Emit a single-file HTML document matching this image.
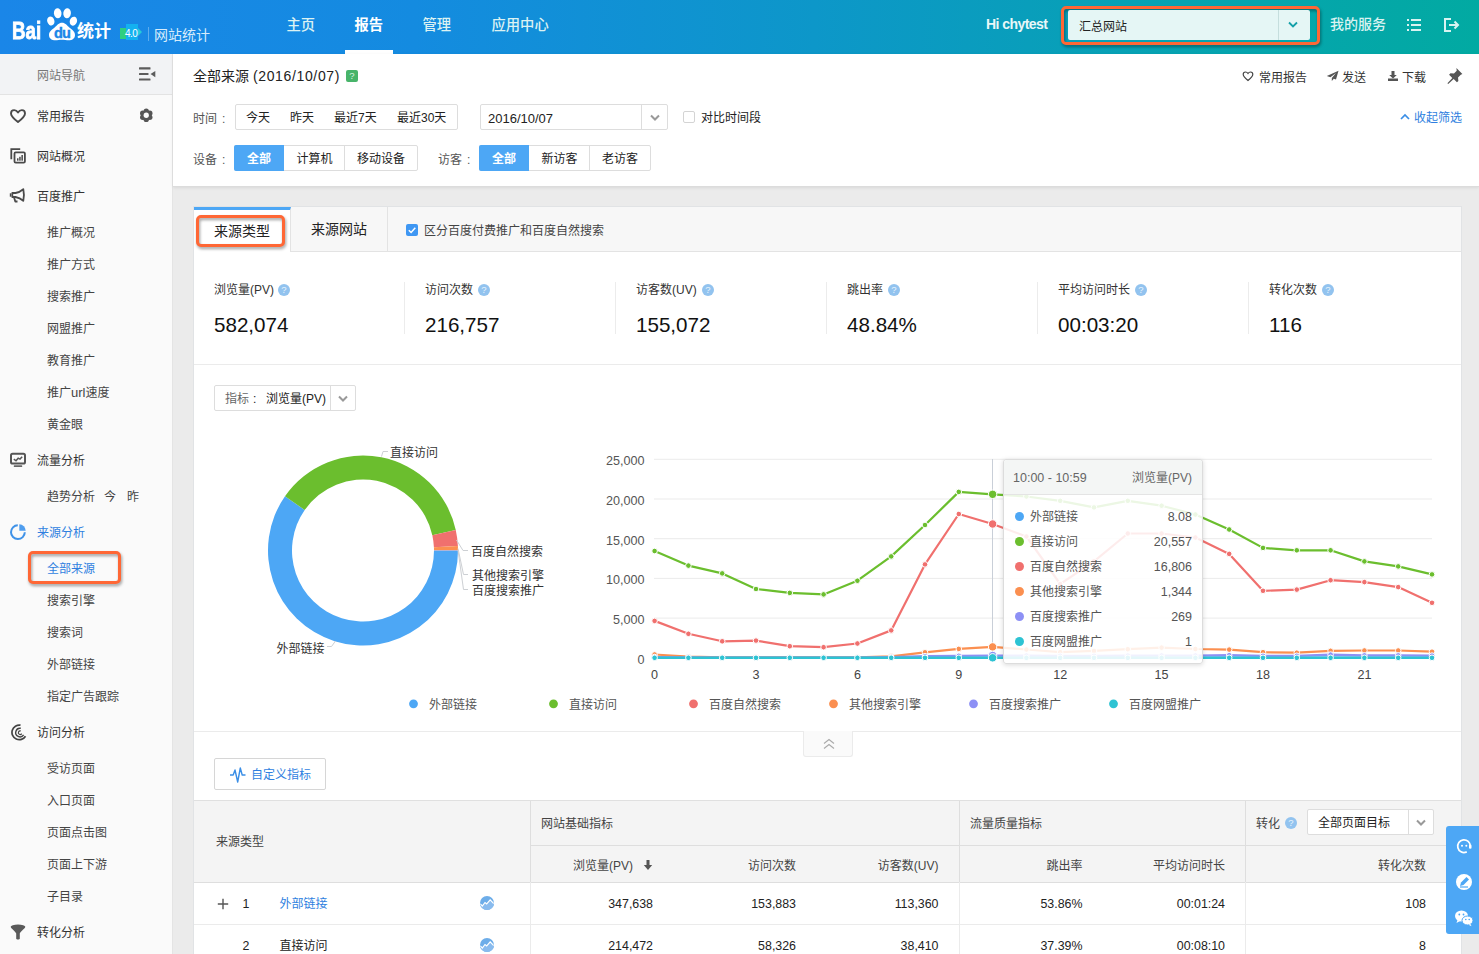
<!DOCTYPE html>
<html lang="zh-CN">
<head>
<meta charset="utf-8">
<title>百度统计 - 全部来源</title>
<style>
*{box-sizing:border-box;margin:0;padding:0}
html,body{width:1479px;height:954px;overflow:hidden}
body{font-family:"Liberation Sans","Noto Sans CJK SC",sans-serif;font-size:12px;color:#333;background:#ebebeb;position:relative}
.abs{position:absolute}
.t{position:absolute;white-space:nowrap;line-height:20px;height:20px}
/* header */
#hd{position:absolute;left:0;top:0;width:1479px;height:54px;background:linear-gradient(90deg,#1a86e8 0%,#148be0 28%,#0d97c9 55%,#06a3b1 80%,#02aaa2 100%)}
#hd .nav{position:absolute;top:14.500px;font-size:14.300px;line-height:20px;color:#dcf2f3;white-space:nowrap;font-weight:500;margin-left:.5px}
#hd .nav.on{color:#fff;font-weight:bold}
/* sidebar */
#sb{position:absolute;left:0;top:54px;width:173px;height:900px;background:#fafafa;border-right:1px solid #e4e4e4}
#sb .nh{position:absolute;left:0;top:0;width:172px;height:41px;background:#f2f3f5;border-bottom:1px solid #e3e3e3}
#sb .m{position:absolute;left:37px;font-size:12px;line-height:20px;color:#333;white-space:nowrap}
#sb .s{position:absolute;left:47px;font-size:12px;line-height:20px;color:#444;white-space:nowrap}
#sb .ic{position:absolute;left:9px;width:18px;height:18px}
/* top panel */
#tp{position:absolute;left:173px;top:54px;width:1306px;height:133px;background:#fff;border-bottom:1px solid #dcdcdc;box-shadow:0 1px 3px rgba(0,0,0,.08)}
.grp{position:absolute;height:26px;border:1px solid #ddd;border-radius:2px;background:#fff}
.grp span{position:absolute;top:0;height:24px;line-height:25px;padding-top:1px;text-align:center;color:#222;white-space:nowrap}
.grp span.on{background:#4da7f5;color:#fff;font-weight:bold;top:-1px;height:26px;line-height:27px}
/* card */
#cd{position:absolute;left:194px;top:207px;width:1267px;height:760px;background:#fff}
.hp{position:absolute;width:12px;height:12px;border-radius:6px;background:#92c3ef;color:#e9f3fc;font-size:9.500px;line-height:12.500px;text-align:center;font-style:normal}
</style>
</head>
<body>
<div id="hd">
<span class="t" style="left:12px;top:17px;font-size:23.500px;font-weight:bold;color:#fff;line-height:28px;height:28px;letter-spacing:0;transform:scaleX(.8);transform-origin:0 0;-webkit-text-stroke:.8px #fff">Bai</span>
<svg class="abs" style="left:44px;top:7px" width="36" height="36" viewBox="0 0 36 36">
<g fill="#fff">
<ellipse cx="6.800" cy="14" rx="3.600" ry="4.600" transform="rotate(-18 6.800 14)"/>
<ellipse cx="13.700" cy="6.200" rx="3.800" ry="5" transform="rotate(-6 13.700 6.200)"/>
<ellipse cx="23.100" cy="6.200" rx="3.800" ry="5" transform="rotate(6 23.100 6.200)"/>
<ellipse cx="29.400" cy="14.200" rx="3.600" ry="4.600" transform="rotate(18 29.400 14.200)"/>
<path d="M18 15.800c3.300 0 4.800 2.600 7.600 5 2.700 2.200 5.400 3.900 5.400 7.100 0 3.700-3.100 5.400-6.200 5.400-2.500 0-4.300-.6-6.800-.6s-4.300.6-6.800.6c-3.100 0-6.200-1.700-6.200-5.400 0-3.200 2.700-4.900 5.400-7.100 2.800-2.400 4.300-5 7.600-5z"/>
</g>
<text x="18" y="30.800" text-anchor="middle" font-family="Liberation Sans, sans-serif" font-weight="bold" font-size="14.500" fill="#1a86e8" stroke="#1a86e8" stroke-width=".4" letter-spacing="-.8">du</text>
</svg>
<span class="t" style="left:77px;top:20px;font-size:17px;font-weight:bold;color:#fff;line-height:24px;height:24px">统计</span>
<div class="abs" style="left:120px;top:28px;width:6.500px;height:11px;background:#2fcf7f"></div>
<div class="abs" style="left:125.500px;top:24px;width:12.500px;height:15.800px;background:#14b1f0"></div>
<div class="abs" style="left:138px;top:28px;width:0;height:0;border-top:4.500px solid transparent;border-bottom:4.500px solid transparent;border-left:4px solid #25cbd8"></div>
<span class="t" style="left:125px;top:23.500px;font-size:10px;color:#fff;letter-spacing:-.6px">4.0</span>
<div class="abs" style="left:148px;top:27px;width:1px;height:14px;background:rgba(255,255,255,.3)"></div>
<span class="t" style="left:154px;top:25px;font-size:14px;color:#d6ecfb">网站统计</span>
<span class="nav" style="left:286px">主页</span>
<span class="nav on" style="left:354px">报告</span>
<span class="nav" style="left:422px">管理</span>
<span class="nav" style="left:491px">应用中心</span>
<div class="abs" style="left:345px;top:50px;width:48px;height:4px;background:#fff"></div>
<span class="t" style="left:986px;top:14px;font-size:14px;font-weight:bold;color:#e8f7f8;letter-spacing:-.55px">Hi chytest</span>
<div class="abs" style="left:1060.500px;top:5.800px;width:259px;height:39.700px;border:3px solid #ff6735;border-radius:5px;filter:drop-shadow(1.500px 2px 1.500px rgba(0,0,0,.38))"></div>
<div class="abs" style="left:1068px;top:10px;width:242px;height:30px;background:#e5f6f5;border-radius:2px"></div>
<div class="abs" style="left:1278px;top:10px;width:1px;height:30px;background:#c5dedd"></div>
<span class="t" style="left:1079px;top:16.500px;font-size:12px;color:#222">汇总网站</span>
<svg class="abs" style="left:1287px;top:20px" width="12" height="10" viewBox="0 0 12 10"><path d="M2 2.500l4 4 4-4" fill="none" stroke="#14a0a8" stroke-width="1.800"/></svg>
<span class="t" style="left:1330px;top:14px;font-size:14px;color:#d9f3f1;font-weight:500">我的服务</span>
<svg class="abs" style="left:1406px;top:17px" width="16" height="16" viewBox="0 0 16 16"><g fill="#d9f3f1"><rect x="1" y="2" width="2" height="2"/><rect x="5" y="2" width="10" height="2"/><rect x="1" y="7" width="2" height="2"/><rect x="5" y="7" width="10" height="2"/><rect x="1" y="12" width="2" height="2"/><rect x="5" y="12" width="10" height="2"/></g></svg>
<svg class="abs" style="left:1443px;top:17px" width="18" height="16" viewBox="0 0 18 16"><path d="M8 2H2v12h6" fill="none" stroke="#d9f3f1" stroke-width="2"/><path d="M6 8h8M11.500 4.500L15 8l-3.500 3.500" fill="none" stroke="#d9f3f1" stroke-width="2"/></svg>
</div>
<div id="sb">
<div class="nh"></div>
<span class="m" style="top:12px;color:#777">网站导航</span>
<svg class="abs" style="left:138px;top:12px" width="18" height="16" viewBox="0 0 18 16"><g fill="#5c5c5c"><rect x="1" y="1.300" width="11.500" height="2.100" rx=".5"/><rect x="1" y="6.900" width="9.500" height="2.100" rx=".5"/><rect x="1" y="12.400" width="11.500" height="2.100" rx=".5"/><path d="M17.300 5v6.200l-4.800-3.100z"/></g></svg>
<svg class="ic" style="top:53px" viewBox="0 0 18 18"><path d="M9 15C4.300 11.300 2 9 2 6.400 2 4.500 3.400 3.100 5.200 3.100c1.500 0 2.900.9 3.800 2.300.9-1.400 2.300-2.300 3.800-2.300 1.800 0 3.200 1.400 3.200 3.300 0 2.600-2.300 4.900-7 8.600z" fill="none" stroke="#4a4a4a" stroke-width="1.900" stroke-linejoin="round"/></svg>
<span class="m" style="top:53px">常用报告</span>
<svg class="abs" style="left:139px;top:54px" width="14.500" height="14.500" viewBox="0 0 16 16"><g fill="#555"><circle cx="8" cy="8" r="5.800"/><circle cx="11.98" cy="10.30" r="2.900"/><circle cx="8.00" cy="12.60" r="2.900"/><circle cx="4.02" cy="10.30" r="2.900"/><circle cx="4.02" cy="5.70" r="2.900"/><circle cx="8.00" cy="3.40" r="2.900"/><circle cx="11.98" cy="5.70" r="2.900"/></g><circle cx="8" cy="8" r="2.900" fill="#fafafa"/></svg>
<svg class="ic" style="top:92px" viewBox="0 0 18 18"><path d="M11.200 3.100H2.300v10.200" fill="none" stroke="#4a4a4a" stroke-width="1.800"/><rect x="5.500" y="6.300" width="10.400" height="10.400" rx="1.200" fill="none" stroke="#4a4a4a" stroke-width="1.800"/><rect x="8" y="12.300" width="1.500" height="2.400" fill="#4a4a4a"/><rect x="10.200" y="10.800" width="1.500" height="3.900" fill="#4a4a4a"/><rect x="12.400" y="9" width="1.500" height="5.700" fill="#4a4a4a"/></svg>
<span class="m" style="top:93px">网站概况</span>
<svg class="ic" style="top:132px" viewBox="0 0 18 18"><path d="M3.300 7h3.200c3-.6 5.700-2 7.800-3.800.8 3.600.8 8 0 11.600-2.100-1.800-4.800-3.200-7.800-3.800H3.300z" fill="none" stroke="#4a4a4a" stroke-width="1.800" stroke-linejoin="round"/><path d="M5 11.200l1.300 4.300h2.200" fill="none" stroke="#4a4a4a" stroke-width="1.800" stroke-linejoin="round"/><rect x=".8" y="7.300" width="1.400" height="3.400" fill="#4a4a4a"/></svg>
<span class="m" style="top:133px">百度推广</span>
<span class="s" style="top:169px">推广概况</span>
<span class="s" style="top:201px">推广方式</span>
<span class="s" style="top:233px">搜索推广</span>
<span class="s" style="top:265px">网盟推广</span>
<span class="s" style="top:297px">教育推广</span>
<span class="s" style="top:329px">推广<span style="font-size:13px">url</span>速度</span>
<span class="s" style="top:361px">黄金眼</span>
<svg class="ic" style="top:397px" viewBox="0 0 18 18"><rect x="2" y="2.800" width="14" height="9.800" rx="1.600" fill="none" stroke="#555" stroke-width="2"/><path d="M4.800 8.200l2.200 1.600 2.200-2.600 1.800.9 2.200-2.300" fill="none" stroke="#555" stroke-width="1.500"/><rect x="4.800" y="14.300" width="8.400" height="1.600" rx=".5" fill="#666"/></svg>
<span class="m" style="top:397px">流量分析</span>
<span class="s" style="top:433px">趋势分析</span>
<span class="s" style="left:104px;top:433px">今</span>
<span class="s" style="left:127px;top:433px">昨</span>
<svg class="ic" style="top:469px" viewBox="0 0 18 18"><path d="M8.800 2.300A6.900 6.900 0 1 0 15.800 9.300" fill="none" stroke="#3f92e8" stroke-width="2"/><path d="M10.300 1.300a6.400 6.400 0 0 1 6.400 6.400h-6.400z" fill="#4f9dee"/></svg>
<span class="m" style="top:469px;color:#2f7fe0">来源分析</span>
<div class="abs" style="left:27.700px;top:497.400px;width:93px;height:32.500px;border:3px solid #ff6735;border-radius:5px;filter:drop-shadow(1.500px 2px 1.500px rgba(0,0,0,.38))"></div>
<span class="s" style="top:505px;color:#2f7fe0">全部来源</span>
<span class="s" style="top:537px">搜索引擎</span>
<span class="s" style="top:569px">搜索词</span>
<span class="s" style="top:601px">外部链接</span>
<span class="s" style="top:633px">指定广告跟踪</span>
<svg class="ic" style="top:669px" viewBox="0 0 18 18"><path d="M11.500 2.200a7.300 7.300 0 1 0 5 11" fill="none" stroke="#444" stroke-width="1.700"/><path d="M11.800 5.300a4.300 4.300 0 1 0 2.800 6.600" fill="none" stroke="#444" stroke-width="1.400"/><path d="M11.800 8a1.800 1.800 0 1 0 .9 2.600" fill="none" stroke="#444" stroke-width="1.200"/></svg>
<span class="m" style="top:669px">访问分析</span>
<span class="s" style="top:705px">受访页面</span>
<span class="s" style="top:737px">入口页面</span>
<span class="s" style="top:769px">页面点击图</span>
<span class="s" style="top:801px">页面上下游</span>
<span class="s" style="top:833px">子目录</span>
<svg class="ic" style="top:869px" viewBox="0 0 18 18"><ellipse cx="9" cy="3.800" rx="7.300" ry="2.200" fill="#5a5a5a"/><path d="M1.700 4c.3 1.200 5.500 5.500 5.500 6.600v5.200c0 .9 3.600.9 3.600 0v-5.200c0-1.100 5.200-5.400 5.500-6.600z" fill="#5a5a5a"/></svg>
<span class="m" style="top:869px">转化分析</span>
</div>
<div id="tp">
<span class="t" style="left:20px;top:12px;font-size:14px;color:#222">全部来源 <span style="letter-spacing:.65px">(2016/10/07)</span></span>
<div class="abs" style="left:173px;top:15.500px;width:12px;height:12px;background:#48b46a;border-radius:2px;color:#d9f2e0;font-size:9.500px;line-height:12px;text-align:center">?</div>
<svg class="abs" style="left:1069px;top:16px" width="12" height="12" viewBox="0 0 12 12"><path d="M6 10.500C2.500 7.800 1.200 6.200 1.200 4.300 1.200 3 2.200 2 3.500 2c1 0 1.900.6 2.500 1.500C6.600 2.600 7.500 2 8.500 2c1.300 0 2.300 1 2.300 2.300 0 1.900-1.300 3.500-4.800 6.200z" fill="none" stroke="#444" stroke-width="1.200"/></svg>
<span class="t" style="left:1086px;top:13.5px;color:#333">常用报告</span>
<svg class="abs" style="left:1153px;top:16px" width="13" height="12" viewBox="0 0 13 12"><path d="M12.500.8L.8 6l3.600 1.300L10 3 5.800 8v3l2-2.300 2.200.9z" fill="#555"/></svg>
<span class="t" style="left:1169px;top:13.5px;color:#333">发送</span>
<svg class="abs" style="left:1214px;top:16px" width="12" height="12" viewBox="0 0 12 12"><path d="M4.500 1h3v4h2.300L6 8.500 2.200 5h2.300z" fill="#555"/><path d="M1 8.500h10V11H1z" fill="#555"/></svg>
<span class="t" style="left:1229px;top:13.5px;color:#333">下载</span>
<svg class="abs" style="left:1272.500px;top:13px" width="17.500" height="17.500" viewBox="0 0 16 16"><path d="M9.500 1l5.500 5.500-1.500.5-2.500 2.500.3 3.200-1.300 1.300-3-3L2 15.500l-.7-.7L5.800 10l-3-3 1.300-1.300 3.200.3L9.800 3.500z" fill="#555"/></svg>
<span class="t" style="left:20px;top:54.5px;color:#555">时间<span style="margin-left:5px">:</span></span>
<div class="grp" style="left:62px;top:50px;width:223px"><span style="left:10px">今天</span><span style="left:54px">昨天</span><span style="left:98px">最近7天</span><span style="left:161px">最近30天</span></div>
<div class="grp" style="left:307px;top:50px;width:188px"><span style="left:7px;font-size:13px">2016/10/07</span><i class="abs" style="left:160px;top:0;width:1px;height:24px;background:#ddd"></i><svg class="abs" style="left:168px;top:8px" width="12" height="10" viewBox="0 0 12 10"><path d="M2 2.500l4 4 4-4" fill="none" stroke="#999" stroke-width="2"/></svg></div>
<div class="abs" style="left:510px;top:57px;width:12px;height:12px;border:1px solid #d4d4d4;border-radius:2px;background:#fff"></div>
<span class="t" style="left:528px;top:54px;color:#222">对比时间段</span>
<svg class="abs" style="left:1226px;top:58px" width="12" height="10" viewBox="0 0 12 10"><path d="M2 7l4-4 4 4" fill="none" stroke="#3a8ee6" stroke-width="1.700"/></svg>
<span class="t" style="left:1241px;top:54px;color:#2f7fe0">收起筛选</span>
<span class="t" style="left:20px;top:95.5px;color:#555">设备<span style="margin-left:5px">:</span></span>
<div class="grp" style="left:61px;top:91px;width:184px"><span class="on" style="left:-1px;width:50px;border-radius:2px 0 0 2px">全部</span><span style="left:50px;width:60px;border-right:1px solid #ddd">计算机</span><span style="left:110px;width:72px">移动设备</span></div>
<span class="t" style="left:265px;top:95.5px;color:#555">访客<span style="margin-left:5px">:</span></span>
<div class="grp" style="left:306px;top:91px;width:172px"><span class="on" style="left:-1px;width:50px;border-radius:2px 0 0 2px">全部</span><span style="left:50px;width:60px;border-right:1px solid #ddd">新访客</span><span style="left:110px;width:60px">老访客</span></div>
</div>
<div id="cd">
<div class="abs" style="left:0;top:0;width:1267px;height:45px;background:#f7f7f7;border-bottom:1px solid #e3e3e3"></div>
<div class="abs" style="left:0;top:0;width:97px;height:45px;background:#fff;border-top:3px solid #4da7f5;border-right:1px solid #e3e3e3"></div>
<div class="abs" style="left:193px;top:0;width:1px;height:44px;background:#e3e3e3"></div>
<div class="abs" style="left:1.500px;top:8.300px;width:89.200px;height:32.200px;border:3px solid #ff6735;border-radius:5px;filter:drop-shadow(1.500px 2px 1.500px rgba(0,0,0,.38))"></div>
<span class="t" style="left:20px;top:13.8px;font-size:14px;color:#222">来源类型</span>
<span class="t" style="left:117px;top:12.0px;font-size:14px;color:#222">来源网站</span>
<div class="abs" style="left:212px;top:17px;width:12px;height:12px;background:#3f97f3;border-radius:2px"><svg width="12" height="12" viewBox="0 0 12 12" style="display:block"><path d="M2.800 6.200l2.300 2.300 4.200-4.700" fill="none" stroke="#fff" stroke-width="1.500"/></svg></div>
<span class="t" style="left:230px;top:14.3px;color:#444">区分百度付费推广和百度自然搜索</span>
<span class="t" style="left:20px;top:73.3px;color:#333">浏览量(PV)</span>
<i class="hp" style="left:84px;top:76.5px">?</i>
<span class="t" style="left:20px;top:105.3px;font-size:20.600px;color:#111;line-height:26px;height:26px">582,074</span>
<span class="t" style="left:231px;top:73.3px;color:#333">访问次数</span>
<i class="hp" style="left:284px;top:76.5px">?</i>
<span class="t" style="left:231px;top:105.3px;font-size:20.600px;color:#111;line-height:26px;height:26px">216,757</span>
<div class="abs" style="left:210px;top:75px;width:1px;height:52px;background:#ececec"></div>
<span class="t" style="left:442px;top:73.3px;color:#333">访客数(UV)</span>
<i class="hp" style="left:508px;top:76.5px">?</i>
<span class="t" style="left:442px;top:105.3px;font-size:20.600px;color:#111;line-height:26px;height:26px">155,072</span>
<div class="abs" style="left:421px;top:75px;width:1px;height:52px;background:#ececec"></div>
<span class="t" style="left:653px;top:73.3px;color:#333">跳出率</span>
<i class="hp" style="left:694px;top:76.5px">?</i>
<span class="t" style="left:653px;top:105.3px;font-size:20.600px;color:#111;line-height:26px;height:26px">48.84%</span>
<div class="abs" style="left:632px;top:75px;width:1px;height:52px;background:#ececec"></div>
<span class="t" style="left:864px;top:73.3px;color:#333">平均访问时长</span>
<i class="hp" style="left:941px;top:76.5px">?</i>
<span class="t" style="left:864px;top:105.3px;font-size:20.600px;color:#111;line-height:26px;height:26px">00:03:20</span>
<div class="abs" style="left:843px;top:75px;width:1px;height:52px;background:#ececec"></div>
<span class="t" style="left:1075px;top:73.3px;color:#333">转化次数</span>
<i class="hp" style="left:1128px;top:76.5px">?</i>
<span class="t" style="left:1075px;top:105.3px;font-size:20.600px;color:#111;line-height:26px;height:26px">116</span>
<div class="abs" style="left:1054px;top:75px;width:1px;height:52px;background:#ececec"></div>
<div class="abs" style="left:0;top:157px;width:1267px;height:1px;background:#ebebeb"></div>
<div class="grp" style="left:20px;top:178px;width:142px"><span style="left:10px;color:#666">指标<span style="margin-left:4px">:</span></span><span style="left:51px;color:#222">浏览量(PV)</span><i class="abs" style="left:115px;top:0;width:1px;height:24px;background:#ddd"></i><svg class="abs" style="left:122px;top:8px" width="12" height="10" viewBox="0 0 12 10"><path d="M2 2.500l4 4 4-4" fill="none" stroke="#999" stroke-width="2"/></svg></div>
<svg class="abs" style="left:-194px;top:-207px" width="1479" height="954" viewBox="0 0 1479 954" font-family="Liberation Sans, Noto Sans CJK SC, sans-serif" font-size="12">
<line x1="654" y1="459.3" x2="1432" y2="459.3" stroke="#ebebeb" stroke-width="1"/>
<text x="644.500" y="465.3" text-anchor="end" fill="#555" font-size="12.600">25,000</text>
<line x1="654" y1="499.0" x2="1432" y2="499.0" stroke="#ebebeb" stroke-width="1"/>
<text x="644.500" y="505.0" text-anchor="end" fill="#555" font-size="12.600">20,000</text>
<line x1="654" y1="538.7" x2="1432" y2="538.7" stroke="#ebebeb" stroke-width="1"/>
<text x="644.500" y="544.7" text-anchor="end" fill="#555" font-size="12.600">15,000</text>
<line x1="654" y1="578.4" x2="1432" y2="578.4" stroke="#ebebeb" stroke-width="1"/>
<text x="644.500" y="584.4" text-anchor="end" fill="#555" font-size="12.600">10,000</text>
<line x1="654" y1="618.1" x2="1432" y2="618.1" stroke="#ebebeb" stroke-width="1"/>
<text x="644.500" y="624.1" text-anchor="end" fill="#555" font-size="12.600">5,000</text>
<line x1="654" y1="657.8" x2="1432" y2="657.8" stroke="#ddd" stroke-width="1"/>
<text x="644.500" y="663.8" text-anchor="end" fill="#555" font-size="12.600">0</text>
<text x="654.6" y="678.700" text-anchor="middle" fill="#444" font-size="12.600">0</text>
<text x="756.0" y="678.700" text-anchor="middle" fill="#444" font-size="12.600">3</text>
<text x="857.4" y="678.700" text-anchor="middle" fill="#444" font-size="12.600">6</text>
<text x="958.8" y="678.700" text-anchor="middle" fill="#444" font-size="12.600">9</text>
<text x="1060.2" y="678.700" text-anchor="middle" fill="#444" font-size="12.600">12</text>
<text x="1161.6" y="678.700" text-anchor="middle" fill="#444" font-size="12.600">15</text>
<text x="1263.0" y="678.700" text-anchor="middle" fill="#444" font-size="12.600">18</text>
<text x="1364.4" y="678.700" text-anchor="middle" fill="#444" font-size="12.600">21</text>
<line x1="992.500" y1="459" x2="992.500" y2="658" stroke="#c9cfd8" stroke-width="1"/>
<polyline points="654.6,657.7 688.4,657.7 722.2,657.7 756.0,657.7 789.8,657.7 823.6,657.7 857.4,657.7 891.2,657.7 925.0,657.7 958.8,657.7 992.6,657.7 1026.4,657.7 1060.2,657.7 1094.0,657.7 1127.8,657.7 1161.6,657.7 1195.4,657.7 1229.2,657.7 1263.0,657.7 1296.8,657.7 1330.6,657.7 1364.4,657.7 1398.2,657.7 1432.0,657.7" fill="none" stroke="#4da7f5" stroke-width="2.200" stroke-linejoin="round"/>
<circle cx="654.6" cy="657.7" r="2.8" fill="#4da7f5" stroke="#fff" stroke-width="1"/>
<circle cx="688.4" cy="657.7" r="2.8" fill="#4da7f5" stroke="#fff" stroke-width="1"/>
<circle cx="722.2" cy="657.7" r="2.8" fill="#4da7f5" stroke="#fff" stroke-width="1"/>
<circle cx="756.0" cy="657.7" r="2.8" fill="#4da7f5" stroke="#fff" stroke-width="1"/>
<circle cx="789.8" cy="657.7" r="2.8" fill="#4da7f5" stroke="#fff" stroke-width="1"/>
<circle cx="823.6" cy="657.7" r="2.8" fill="#4da7f5" stroke="#fff" stroke-width="1"/>
<circle cx="857.4" cy="657.7" r="2.8" fill="#4da7f5" stroke="#fff" stroke-width="1"/>
<circle cx="891.2" cy="657.7" r="2.8" fill="#4da7f5" stroke="#fff" stroke-width="1"/>
<circle cx="925.0" cy="657.7" r="2.8" fill="#4da7f5" stroke="#fff" stroke-width="1"/>
<circle cx="958.8" cy="657.7" r="2.8" fill="#4da7f5" stroke="#fff" stroke-width="1"/>
<circle cx="992.6" cy="657.7" r="4.2" fill="#4da7f5" stroke="#fff" stroke-width="1"/>
<circle cx="1026.4" cy="657.7" r="2.8" fill="#4da7f5" stroke="#fff" stroke-width="1"/>
<circle cx="1060.2" cy="657.7" r="2.8" fill="#4da7f5" stroke="#fff" stroke-width="1"/>
<circle cx="1094.0" cy="657.7" r="2.8" fill="#4da7f5" stroke="#fff" stroke-width="1"/>
<circle cx="1127.8" cy="657.7" r="2.8" fill="#4da7f5" stroke="#fff" stroke-width="1"/>
<circle cx="1161.6" cy="657.7" r="2.8" fill="#4da7f5" stroke="#fff" stroke-width="1"/>
<circle cx="1195.4" cy="657.7" r="2.8" fill="#4da7f5" stroke="#fff" stroke-width="1"/>
<circle cx="1229.2" cy="657.7" r="2.8" fill="#4da7f5" stroke="#fff" stroke-width="1"/>
<circle cx="1263.0" cy="657.7" r="2.8" fill="#4da7f5" stroke="#fff" stroke-width="1"/>
<circle cx="1296.8" cy="657.7" r="2.8" fill="#4da7f5" stroke="#fff" stroke-width="1"/>
<circle cx="1330.6" cy="657.7" r="2.8" fill="#4da7f5" stroke="#fff" stroke-width="1"/>
<circle cx="1364.4" cy="657.7" r="2.8" fill="#4da7f5" stroke="#fff" stroke-width="1"/>
<circle cx="1398.2" cy="657.7" r="2.8" fill="#4da7f5" stroke="#fff" stroke-width="1"/>
<circle cx="1432.0" cy="657.7" r="2.8" fill="#4da7f5" stroke="#fff" stroke-width="1"/>
<polyline points="654.6,551.0 688.4,565.6 722.2,573.4 756.0,589.0 789.8,592.9 823.6,594.4 857.4,580.7 891.2,556.4 925.0,525.0 958.8,491.9 992.6,494.3 1026.4,496.5 1060.2,500.8 1094.0,507.4 1127.8,500.8 1161.6,505.7 1195.4,514.5 1229.2,529.5 1263.0,547.9 1296.8,550.3 1330.6,550.3 1364.4,561.4 1398.2,566.4 1432.0,574.4" fill="none" stroke="#6bbe2e" stroke-width="2.200" stroke-linejoin="round"/>
<circle cx="654.6" cy="551.0" r="2.8" fill="#6bbe2e" stroke="#fff" stroke-width="1"/>
<circle cx="688.4" cy="565.6" r="2.8" fill="#6bbe2e" stroke="#fff" stroke-width="1"/>
<circle cx="722.2" cy="573.4" r="2.8" fill="#6bbe2e" stroke="#fff" stroke-width="1"/>
<circle cx="756.0" cy="589.0" r="2.8" fill="#6bbe2e" stroke="#fff" stroke-width="1"/>
<circle cx="789.8" cy="592.9" r="2.8" fill="#6bbe2e" stroke="#fff" stroke-width="1"/>
<circle cx="823.6" cy="594.4" r="2.8" fill="#6bbe2e" stroke="#fff" stroke-width="1"/>
<circle cx="857.4" cy="580.7" r="2.8" fill="#6bbe2e" stroke="#fff" stroke-width="1"/>
<circle cx="891.2" cy="556.4" r="2.8" fill="#6bbe2e" stroke="#fff" stroke-width="1"/>
<circle cx="925.0" cy="525.0" r="2.8" fill="#6bbe2e" stroke="#fff" stroke-width="1"/>
<circle cx="958.8" cy="491.9" r="2.8" fill="#6bbe2e" stroke="#fff" stroke-width="1"/>
<circle cx="992.6" cy="494.3" r="4.2" fill="#6bbe2e" stroke="#fff" stroke-width="1"/>
<circle cx="1026.4" cy="496.5" r="2.8" fill="#6bbe2e" stroke="#fff" stroke-width="1"/>
<circle cx="1060.2" cy="500.8" r="2.8" fill="#6bbe2e" stroke="#fff" stroke-width="1"/>
<circle cx="1094.0" cy="507.4" r="2.8" fill="#6bbe2e" stroke="#fff" stroke-width="1"/>
<circle cx="1127.8" cy="500.8" r="2.8" fill="#6bbe2e" stroke="#fff" stroke-width="1"/>
<circle cx="1161.6" cy="505.7" r="2.8" fill="#6bbe2e" stroke="#fff" stroke-width="1"/>
<circle cx="1195.4" cy="514.5" r="2.8" fill="#6bbe2e" stroke="#fff" stroke-width="1"/>
<circle cx="1229.2" cy="529.5" r="2.8" fill="#6bbe2e" stroke="#fff" stroke-width="1"/>
<circle cx="1263.0" cy="547.9" r="2.8" fill="#6bbe2e" stroke="#fff" stroke-width="1"/>
<circle cx="1296.8" cy="550.3" r="2.8" fill="#6bbe2e" stroke="#fff" stroke-width="1"/>
<circle cx="1330.6" cy="550.3" r="2.8" fill="#6bbe2e" stroke="#fff" stroke-width="1"/>
<circle cx="1364.4" cy="561.4" r="2.8" fill="#6bbe2e" stroke="#fff" stroke-width="1"/>
<circle cx="1398.2" cy="566.4" r="2.8" fill="#6bbe2e" stroke="#fff" stroke-width="1"/>
<circle cx="1432.0" cy="574.4" r="2.8" fill="#6bbe2e" stroke="#fff" stroke-width="1"/>
<polyline points="654.6,620.9 688.4,633.8 722.2,641.3 756.0,640.6 789.8,646.2 823.6,647.2 857.4,643.5 891.2,630.4 925.0,564.4 958.8,514.0 992.6,524.0 1026.4,536.5 1060.2,584.0 1094.0,561.3 1127.8,533.5 1161.6,533.5 1195.4,537.5 1229.2,553.9 1263.0,590.8 1296.8,589.6 1330.6,580.2 1364.4,582.1 1398.2,587.1 1432.0,602.8" fill="none" stroke="#f0706e" stroke-width="2.200" stroke-linejoin="round"/>
<circle cx="654.6" cy="620.9" r="2.8" fill="#f0706e" stroke="#fff" stroke-width="1"/>
<circle cx="688.4" cy="633.8" r="2.8" fill="#f0706e" stroke="#fff" stroke-width="1"/>
<circle cx="722.2" cy="641.3" r="2.8" fill="#f0706e" stroke="#fff" stroke-width="1"/>
<circle cx="756.0" cy="640.6" r="2.8" fill="#f0706e" stroke="#fff" stroke-width="1"/>
<circle cx="789.8" cy="646.2" r="2.8" fill="#f0706e" stroke="#fff" stroke-width="1"/>
<circle cx="823.6" cy="647.2" r="2.8" fill="#f0706e" stroke="#fff" stroke-width="1"/>
<circle cx="857.4" cy="643.5" r="2.8" fill="#f0706e" stroke="#fff" stroke-width="1"/>
<circle cx="891.2" cy="630.4" r="2.8" fill="#f0706e" stroke="#fff" stroke-width="1"/>
<circle cx="925.0" cy="564.4" r="2.8" fill="#f0706e" stroke="#fff" stroke-width="1"/>
<circle cx="958.8" cy="514.0" r="2.8" fill="#f0706e" stroke="#fff" stroke-width="1"/>
<circle cx="992.6" cy="524.0" r="4.2" fill="#f0706e" stroke="#fff" stroke-width="1"/>
<circle cx="1026.4" cy="536.5" r="2.8" fill="#f0706e" stroke="#fff" stroke-width="1"/>
<circle cx="1060.2" cy="584.0" r="2.8" fill="#f0706e" stroke="#fff" stroke-width="1"/>
<circle cx="1094.0" cy="561.3" r="2.8" fill="#f0706e" stroke="#fff" stroke-width="1"/>
<circle cx="1127.8" cy="533.5" r="2.8" fill="#f0706e" stroke="#fff" stroke-width="1"/>
<circle cx="1161.6" cy="533.5" r="2.8" fill="#f0706e" stroke="#fff" stroke-width="1"/>
<circle cx="1195.4" cy="537.5" r="2.8" fill="#f0706e" stroke="#fff" stroke-width="1"/>
<circle cx="1229.2" cy="553.9" r="2.8" fill="#f0706e" stroke="#fff" stroke-width="1"/>
<circle cx="1263.0" cy="590.8" r="2.8" fill="#f0706e" stroke="#fff" stroke-width="1"/>
<circle cx="1296.8" cy="589.6" r="2.8" fill="#f0706e" stroke="#fff" stroke-width="1"/>
<circle cx="1330.6" cy="580.2" r="2.8" fill="#f0706e" stroke="#fff" stroke-width="1"/>
<circle cx="1364.4" cy="582.1" r="2.8" fill="#f0706e" stroke="#fff" stroke-width="1"/>
<circle cx="1398.2" cy="587.1" r="2.8" fill="#f0706e" stroke="#fff" stroke-width="1"/>
<circle cx="1432.0" cy="602.8" r="2.8" fill="#f0706e" stroke="#fff" stroke-width="1"/>
<polyline points="654.6,654.5 688.4,656.7 722.2,657.3 756.0,657.4 789.8,657.4 823.6,657.4 857.4,657.3 891.2,656.4 925.0,652.3 958.8,648.9 992.6,646.9 1026.4,649.5 1060.2,652.2 1094.0,650.9 1127.8,649.2 1161.6,647.6 1195.4,649.0 1229.2,649.6 1263.0,652.2 1296.8,652.7 1330.6,650.8 1364.4,650.5 1398.2,650.5 1432.0,651.7" fill="none" stroke="#fb8f50" stroke-width="2.200" stroke-linejoin="round"/>
<circle cx="654.6" cy="654.5" r="2.8" fill="#fb8f50" stroke="#fff" stroke-width="1"/>
<circle cx="688.4" cy="656.7" r="2.8" fill="#fb8f50" stroke="#fff" stroke-width="1"/>
<circle cx="722.2" cy="657.3" r="2.8" fill="#fb8f50" stroke="#fff" stroke-width="1"/>
<circle cx="756.0" cy="657.4" r="2.8" fill="#fb8f50" stroke="#fff" stroke-width="1"/>
<circle cx="789.8" cy="657.4" r="2.8" fill="#fb8f50" stroke="#fff" stroke-width="1"/>
<circle cx="823.6" cy="657.4" r="2.8" fill="#fb8f50" stroke="#fff" stroke-width="1"/>
<circle cx="857.4" cy="657.3" r="2.8" fill="#fb8f50" stroke="#fff" stroke-width="1"/>
<circle cx="891.2" cy="656.4" r="2.8" fill="#fb8f50" stroke="#fff" stroke-width="1"/>
<circle cx="925.0" cy="652.3" r="2.8" fill="#fb8f50" stroke="#fff" stroke-width="1"/>
<circle cx="958.8" cy="648.9" r="2.8" fill="#fb8f50" stroke="#fff" stroke-width="1"/>
<circle cx="992.6" cy="646.9" r="4.2" fill="#fb8f50" stroke="#fff" stroke-width="1"/>
<circle cx="1026.4" cy="649.5" r="2.8" fill="#fb8f50" stroke="#fff" stroke-width="1"/>
<circle cx="1060.2" cy="652.2" r="2.8" fill="#fb8f50" stroke="#fff" stroke-width="1"/>
<circle cx="1094.0" cy="650.9" r="2.8" fill="#fb8f50" stroke="#fff" stroke-width="1"/>
<circle cx="1127.8" cy="649.2" r="2.8" fill="#fb8f50" stroke="#fff" stroke-width="1"/>
<circle cx="1161.6" cy="647.6" r="2.8" fill="#fb8f50" stroke="#fff" stroke-width="1"/>
<circle cx="1195.4" cy="649.0" r="2.8" fill="#fb8f50" stroke="#fff" stroke-width="1"/>
<circle cx="1229.2" cy="649.6" r="2.8" fill="#fb8f50" stroke="#fff" stroke-width="1"/>
<circle cx="1263.0" cy="652.2" r="2.8" fill="#fb8f50" stroke="#fff" stroke-width="1"/>
<circle cx="1296.8" cy="652.7" r="2.8" fill="#fb8f50" stroke="#fff" stroke-width="1"/>
<circle cx="1330.6" cy="650.8" r="2.8" fill="#fb8f50" stroke="#fff" stroke-width="1"/>
<circle cx="1364.4" cy="650.5" r="2.8" fill="#fb8f50" stroke="#fff" stroke-width="1"/>
<circle cx="1398.2" cy="650.5" r="2.8" fill="#fb8f50" stroke="#fff" stroke-width="1"/>
<circle cx="1432.0" cy="651.7" r="2.8" fill="#fb8f50" stroke="#fff" stroke-width="1"/>
<polyline points="654.6,657.0 688.4,657.4 722.2,657.5 756.0,657.5 789.8,657.5 823.6,657.5 857.4,657.5 891.2,657.0 925.0,656.2 958.8,655.8 992.6,655.5 1026.4,655.6 1060.2,655.8 1094.0,655.8 1127.8,655.6 1161.6,655.5 1195.4,655.5 1229.2,655.2 1263.0,655.8 1296.8,655.8 1330.6,654.6 1364.4,655.4 1398.2,655.4 1432.0,655.6" fill="none" stroke="#8d90f5" stroke-width="2.200" stroke-linejoin="round"/>
<circle cx="654.6" cy="657.0" r="2.8" fill="#8d90f5" stroke="#fff" stroke-width="1"/>
<circle cx="688.4" cy="657.4" r="2.8" fill="#8d90f5" stroke="#fff" stroke-width="1"/>
<circle cx="722.2" cy="657.5" r="2.8" fill="#8d90f5" stroke="#fff" stroke-width="1"/>
<circle cx="756.0" cy="657.5" r="2.8" fill="#8d90f5" stroke="#fff" stroke-width="1"/>
<circle cx="789.8" cy="657.5" r="2.8" fill="#8d90f5" stroke="#fff" stroke-width="1"/>
<circle cx="823.6" cy="657.5" r="2.8" fill="#8d90f5" stroke="#fff" stroke-width="1"/>
<circle cx="857.4" cy="657.5" r="2.8" fill="#8d90f5" stroke="#fff" stroke-width="1"/>
<circle cx="891.2" cy="657.0" r="2.8" fill="#8d90f5" stroke="#fff" stroke-width="1"/>
<circle cx="925.0" cy="656.2" r="2.8" fill="#8d90f5" stroke="#fff" stroke-width="1"/>
<circle cx="958.8" cy="655.8" r="2.8" fill="#8d90f5" stroke="#fff" stroke-width="1"/>
<circle cx="992.6" cy="655.5" r="4.2" fill="#8d90f5" stroke="#fff" stroke-width="1"/>
<circle cx="1026.4" cy="655.6" r="2.8" fill="#8d90f5" stroke="#fff" stroke-width="1"/>
<circle cx="1060.2" cy="655.8" r="2.8" fill="#8d90f5" stroke="#fff" stroke-width="1"/>
<circle cx="1094.0" cy="655.8" r="2.8" fill="#8d90f5" stroke="#fff" stroke-width="1"/>
<circle cx="1127.8" cy="655.6" r="2.8" fill="#8d90f5" stroke="#fff" stroke-width="1"/>
<circle cx="1161.6" cy="655.5" r="2.8" fill="#8d90f5" stroke="#fff" stroke-width="1"/>
<circle cx="1195.4" cy="655.5" r="2.8" fill="#8d90f5" stroke="#fff" stroke-width="1"/>
<circle cx="1229.2" cy="655.2" r="2.8" fill="#8d90f5" stroke="#fff" stroke-width="1"/>
<circle cx="1263.0" cy="655.8" r="2.8" fill="#8d90f5" stroke="#fff" stroke-width="1"/>
<circle cx="1296.8" cy="655.8" r="2.8" fill="#8d90f5" stroke="#fff" stroke-width="1"/>
<circle cx="1330.6" cy="654.6" r="2.8" fill="#8d90f5" stroke="#fff" stroke-width="1"/>
<circle cx="1364.4" cy="655.4" r="2.8" fill="#8d90f5" stroke="#fff" stroke-width="1"/>
<circle cx="1398.2" cy="655.4" r="2.8" fill="#8d90f5" stroke="#fff" stroke-width="1"/>
<circle cx="1432.0" cy="655.6" r="2.8" fill="#8d90f5" stroke="#fff" stroke-width="1"/>
<polyline points="654.6,657.8 688.4,657.8 722.2,657.8 756.0,657.8 789.8,657.8 823.6,657.8 857.4,657.8 891.2,657.8 925.0,657.8 958.8,657.8 992.6,657.8 1026.4,657.8 1060.2,657.8 1094.0,657.8 1127.8,657.8 1161.6,657.8 1195.4,657.8 1229.2,657.8 1263.0,657.8 1296.8,657.8 1330.6,657.8 1364.4,657.8 1398.2,657.8 1432.0,657.8" fill="none" stroke="#2ec3d3" stroke-width="2.6" stroke-linejoin="round"/>
<circle cx="654.6" cy="657.8" r="2.8" fill="#2ec3d3" stroke="#fff" stroke-width="1"/>
<circle cx="688.4" cy="657.8" r="2.8" fill="#2ec3d3" stroke="#fff" stroke-width="1"/>
<circle cx="722.2" cy="657.8" r="2.8" fill="#2ec3d3" stroke="#fff" stroke-width="1"/>
<circle cx="756.0" cy="657.8" r="2.8" fill="#2ec3d3" stroke="#fff" stroke-width="1"/>
<circle cx="789.8" cy="657.8" r="2.8" fill="#2ec3d3" stroke="#fff" stroke-width="1"/>
<circle cx="823.6" cy="657.8" r="2.8" fill="#2ec3d3" stroke="#fff" stroke-width="1"/>
<circle cx="857.4" cy="657.8" r="2.8" fill="#2ec3d3" stroke="#fff" stroke-width="1"/>
<circle cx="891.2" cy="657.8" r="2.8" fill="#2ec3d3" stroke="#fff" stroke-width="1"/>
<circle cx="925.0" cy="657.8" r="2.8" fill="#2ec3d3" stroke="#fff" stroke-width="1"/>
<circle cx="958.8" cy="657.8" r="2.8" fill="#2ec3d3" stroke="#fff" stroke-width="1"/>
<circle cx="992.6" cy="657.8" r="4.2" fill="#2ec3d3" stroke="#fff" stroke-width="1"/>
<circle cx="1026.4" cy="657.8" r="2.8" fill="#2ec3d3" stroke="#fff" stroke-width="1"/>
<circle cx="1060.2" cy="657.8" r="2.8" fill="#2ec3d3" stroke="#fff" stroke-width="1"/>
<circle cx="1094.0" cy="657.8" r="2.8" fill="#2ec3d3" stroke="#fff" stroke-width="1"/>
<circle cx="1127.8" cy="657.8" r="2.8" fill="#2ec3d3" stroke="#fff" stroke-width="1"/>
<circle cx="1161.6" cy="657.8" r="2.8" fill="#2ec3d3" stroke="#fff" stroke-width="1"/>
<circle cx="1195.4" cy="657.8" r="2.8" fill="#2ec3d3" stroke="#fff" stroke-width="1"/>
<circle cx="1229.2" cy="657.8" r="2.8" fill="#2ec3d3" stroke="#fff" stroke-width="1"/>
<circle cx="1263.0" cy="657.8" r="2.8" fill="#2ec3d3" stroke="#fff" stroke-width="1"/>
<circle cx="1296.8" cy="657.8" r="2.8" fill="#2ec3d3" stroke="#fff" stroke-width="1"/>
<circle cx="1330.6" cy="657.8" r="2.8" fill="#2ec3d3" stroke="#fff" stroke-width="1"/>
<circle cx="1364.4" cy="657.8" r="2.8" fill="#2ec3d3" stroke="#fff" stroke-width="1"/>
<circle cx="1398.2" cy="657.8" r="2.8" fill="#2ec3d3" stroke="#fff" stroke-width="1"/>
<circle cx="1432.0" cy="657.8" r="2.8" fill="#2ec3d3" stroke="#fff" stroke-width="1"/>
<path d="M458.0 550.5A95 95 0 1 1 284.99 496.28L304.7 509.98A71 71 0 1 0 434.0 550.5Z" fill="#4da7f5"/>
<path d="M284.99 496.28A95 95 0 0 1 455.75 529.94L432.32 535.13A71 71 0 0 0 304.7 509.98Z" fill="#6bbe2e"/>
<path d="M455.75 529.94A95 95 0 0 1 457.89 546.02L433.92 547.16A71 71 0 0 0 432.32 535.13Z" fill="#f0706e"/>
<path d="M457.89 546.02A95 95 0 0 1 458.0 550.25L434.0 550.31A71 71 0 0 0 433.92 547.16Z" fill="#fb8f50"/>
<path d="M458.0 550.25A95 95 0 0 1 458.0 550.5L434.0 550.5A71 71 0 0 0 434.0 550.31Z" fill="#8d90f5"/>
<polyline points="381.500,456.500 383,451.500 388,451.500" fill="none" stroke="#cdd0d4" stroke-width="1"/>
<polyline points="456.500,540 463,550.500 468,550.500" fill="none" stroke="#cdd0d4" stroke-width="1"/>
<polyline points="458,548.500 463.500,574.500 468,574.500" fill="none" stroke="#cdd0d4" stroke-width="1"/>
<polyline points="458,550 463.500,589.500 468,589.500" fill="none" stroke="#cdd0d4" stroke-width="1"/>
<polyline points="335.500,641 331.500,646.500 327,646.500" fill="none" stroke="#cdd0d4" stroke-width="1"/>
<text x="390" y="456.700" text-anchor="start" fill="#333">直接访问</text>
<text x="471" y="555.7" text-anchor="start" fill="#333">百度自然搜索</text>
<text x="472" y="579.7" text-anchor="start" fill="#333">其他搜索引擎</text>
<text x="472" y="594.7" text-anchor="start" fill="#333">百度搜索推广</text>
<text x="324.5" y="652.7" text-anchor="end" fill="#333">外部链接</text>
<circle cx="413.5" cy="703.800" r="4.400" fill="#4da7f5"/>
<text x="429.0" y="709" fill="#555">外部链接</text>
<circle cx="553.5" cy="703.800" r="4.400" fill="#6bbe2e"/>
<text x="569.0" y="709" fill="#555">直接访问</text>
<circle cx="693.5" cy="703.800" r="4.400" fill="#f0706e"/>
<text x="709.0" y="709" fill="#555">百度自然搜索</text>
<circle cx="833.5" cy="703.800" r="4.400" fill="#fb8f50"/>
<text x="849.0" y="709" fill="#555">其他搜索引擎</text>
<circle cx="973.5" cy="703.800" r="4.400" fill="#8d90f5"/>
<text x="989.0" y="709" fill="#555">百度搜索推广</text>
<circle cx="1113.5" cy="703.800" r="4.400" fill="#2ec3d3"/>
<text x="1129.0" y="709" fill="#555">百度网盟推广</text>
</svg>
<div class="abs" style="left:809px;top:252px;width:200px;height:205px;background:rgba(255,255,255,.87);border:1px solid #dcdcdc;border-radius:3px;box-shadow:0 1px 5px rgba(0,0,0,.15)">
<div class="abs" style="left:0;top:0;width:198px;height:35px;background:rgba(241,244,243,.8);border-bottom:1px solid #e4e4e4;border-radius:3px 3px 0 0"></div>
<span class="t" style="left:9px;top:8px;color:#666;font-size:12.500px">10:00 - 10:59</span>
<span class="t" style="right:10px;top:8px;color:#666">浏览量(PV)</span>
<i class="abs" style="left:11px;top:51.5px;width:9px;height:9px;border-radius:5px;background:#4da7f5"></i>
<span class="t" style="left:26px;top:47.0px;color:#555">外部链接</span>
<span class="t" style="right:10px;top:47.0px;color:#555;font-size:12.500px">8.08</span>
<i class="abs" style="left:11px;top:76.5px;width:9px;height:9px;border-radius:5px;background:#6bbe2e"></i>
<span class="t" style="left:26px;top:72.0px;color:#555">直接访问</span>
<span class="t" style="right:10px;top:72.0px;color:#555;font-size:12.500px">20,557</span>
<i class="abs" style="left:11px;top:101.5px;width:9px;height:9px;border-radius:5px;background:#f0706e"></i>
<span class="t" style="left:26px;top:97.0px;color:#555">百度自然搜索</span>
<span class="t" style="right:10px;top:97.0px;color:#555;font-size:12.500px">16,806</span>
<i class="abs" style="left:11px;top:126.5px;width:9px;height:9px;border-radius:5px;background:#fb8f50"></i>
<span class="t" style="left:26px;top:122.0px;color:#555">其他搜索引擎</span>
<span class="t" style="right:10px;top:122.0px;color:#555;font-size:12.500px">1,344</span>
<i class="abs" style="left:11px;top:151.5px;width:9px;height:9px;border-radius:5px;background:#8d90f5"></i>
<span class="t" style="left:26px;top:147.0px;color:#555">百度搜索推广</span>
<span class="t" style="right:10px;top:147.0px;color:#555;font-size:12.500px">269</span>
<i class="abs" style="left:11px;top:176.5px;width:9px;height:9px;border-radius:5px;background:#2ec3d3"></i>
<span class="t" style="left:26px;top:172.0px;color:#555">百度网盟推广</span>
<span class="t" style="right:10px;top:172.0px;color:#555;font-size:12.500px">1</span>
</div>
<div class="abs" style="left:0;top:524px;width:1267px;height:1px;background:#ebebeb"></div>
<div class="abs" style="left:609px;top:524px;width:50px;height:26px;background:#fafafa;border:1px solid #ebebeb;border-top:none;border-radius:0 0 3px 3px"><svg class="abs" style="left:18px;top:6px" width="14" height="14" viewBox="0 0 14 14"><path d="M2 6.500l5-4 5 4M2 11.500l5-4 5 4" fill="none" stroke="#aaa" stroke-width="1.100"/></svg></div>
<div class="abs" style="left:20px;top:551px;width:112px;height:32px;border:1px solid #d6d6d6;border-radius:2px;background:#fff"></div>
<svg class="abs" style="left:35px;top:559px" width="18" height="18" viewBox="0 0 18 18"><path d="M1 9h3.200l1.800-5 2.700 12 2.600-14 1.900 7h3.300" fill="none" stroke="#3a8ee6" stroke-width="1.400" stroke-linejoin="round"/></svg>
<span class="t" style="left:57px;top:558.1px;color:#2f7fe0">自定义指标</span>
<div class="abs" style="left:0;top:593px;width:1267px;height:83px;background:#f4f4f4;border-top:1px solid #e0e0e0;border-bottom:1px solid #dedede"></div>
<div class="abs" style="left:336px;top:638px;width:931px;height:1px;background:#dedede"></div>
<div class="abs" style="left:336px;top:594px;width:1px;height:81px;background:#dedede"></div>
<div class="abs" style="left:336px;top:675px;width:1px;height:90px;background:#ebebeb"></div>
<div class="abs" style="left:765px;top:594px;width:1px;height:81px;background:#dedede"></div>
<div class="abs" style="left:765px;top:675px;width:1px;height:90px;background:#ebebeb"></div>
<div class="abs" style="left:1051px;top:594px;width:1px;height:81px;background:#dedede"></div>
<div class="abs" style="left:1051px;top:675px;width:1px;height:90px;background:#ebebeb"></div>
<span class="t" style="left:22px;top:625.1px;color:#444">来源类型</span>
<span class="t" style="left:347px;top:606.5px;color:#444">网站基础指标</span>
<span class="t" style="left:776px;top:606.5px;color:#444">流量质量指标</span>
<span class="t" style="left:1062px;top:606.5px;color:#444">转化</span>
<i class="hp" style="left:1091px;top:610px">?</i>
<div class="grp" style="left:1113px;top:601.500px;width:127px"><span style="left:10px;color:#222">全部页面目标</span><i class="abs" style="left:100px;top:0;width:1px;height:24px;background:#ddd"></i><svg class="abs" style="left:107px;top:8px" width="12" height="10" viewBox="0 0 12 10"><path d="M2 2.500l4 4 4-4" fill="none" stroke="#999" stroke-width="2"/></svg></div>
<span class="t" style="right:828px;top:648.5px;color:#444">浏览量(PV)</span>
<svg class="abs" style="left:449px;top:652px" width="10" height="12" viewBox="0 0 10 12"><path d="M3.500 1h3v5h2.700L5 11 .8 6h2.700z" fill="#555"/></svg>
<span class="t" style="right:665px;top:648.5px;color:#444">访问次数</span>
<span class="t" style="right:522.5px;top:648.5px;color:#444">访客数(UV)</span>
<span class="t" style="right:378.5px;top:648.5px;color:#444">跳出率</span>
<span class="t" style="right:236px;top:648.5px;color:#444">平均访问时长</span>
<span class="t" style="right:35px;top:648.5px;color:#444">转化次数</span>
<div class="abs" style="left:0;top:717px;width:1267px;height:1px;background:#ebebeb"></div>
<svg class="abs" style="left:23px;top:690.5px" width="12" height="12" viewBox="0 0 12 12"><path d="M6 .8v10.400M.8 6h10.400" stroke="#555" stroke-width="1.400"/></svg>
<span class="t" style="left:48.5px;top:687.0px;color:#222;font-size:12.400px">1</span>
<span class="t" style="left:85.5px;top:687.0px;color:#2f7fe0">外部链接</span>
<svg class="abs" style="left:285.800px;top:689.0px" width="14" height="14" viewBox="0 0 14 14"><defs><clipPath id="cc1"><circle cx="7" cy="7" r="7"/></clipPath></defs><circle cx="7" cy="7" r="7" fill="#6dade9"/><path d="M0 8l2.300 2 2.700-3.500 1.700 1.500 3.500-4.200L14 7.500V14H0z" fill="#89bbee" clip-path="url(#cc1)"/><path d="M.3 7.800l2 2.200 2.700-3.500 1.700 1.500 3.500-4.200 3.500 3.700" fill="none" stroke="#fff" stroke-width="1.200" clip-path="url(#cc1)"/></svg>
<span class="t" style="right:808px;top:687.0px;color:#222;font-size:12.400px">347,638</span>
<span class="t" style="right:665px;top:687.0px;color:#222;font-size:12.400px">153,883</span>
<span class="t" style="right:522.5px;top:687.0px;color:#222;font-size:12.400px">113,360</span>
<span class="t" style="right:378.5px;top:687.0px;color:#222;font-size:12.400px">53.86%</span>
<span class="t" style="right:236px;top:687.0px;color:#222;font-size:12.400px">00:01:24</span>
<span class="t" style="right:35px;top:687.0px;color:#222;font-size:12.400px">108</span>
<span class="t" style="left:48.5px;top:729.0px;color:#222;font-size:12.400px">2</span>
<span class="t" style="left:85.5px;top:729.0px;color:#222">直接访问</span>
<svg class="abs" style="left:285.800px;top:731.0px" width="14" height="14" viewBox="0 0 14 14"><defs><clipPath id="cc2"><circle cx="7" cy="7" r="7"/></clipPath></defs><circle cx="7" cy="7" r="7" fill="#6dade9"/><path d="M0 8l2.300 2 2.700-3.500 1.700 1.500 3.500-4.200L14 7.500V14H0z" fill="#89bbee" clip-path="url(#cc2)"/><path d="M.3 7.800l2 2.200 2.700-3.500 1.700 1.500 3.500-4.200 3.500 3.700" fill="none" stroke="#fff" stroke-width="1.200" clip-path="url(#cc2)"/></svg>
<span class="t" style="right:808px;top:729.0px;color:#222;font-size:12.400px">214,472</span>
<span class="t" style="right:665px;top:729.0px;color:#222;font-size:12.400px">58,326</span>
<span class="t" style="right:522.5px;top:729.0px;color:#222;font-size:12.400px">38,410</span>
<span class="t" style="right:378.5px;top:729.0px;color:#222;font-size:12.400px">37.39%</span>
<span class="t" style="right:236px;top:729.0px;color:#222;font-size:12.400px">00:08:10</span>
<span class="t" style="right:35px;top:729.0px;color:#222;font-size:12.400px">8</span>
<div class="abs" style="left:-1px;top:-1px;width:1269px;height:761px;border:1px solid #e1e3e5"></div>
</div>
<div class="abs" style="left:1446px;top:826px;width:33px;height:108px;background:#4da7f5;border-radius:3px 0 0 3px">
<svg class="abs" style="left:9px;top:11px" width="18" height="18" viewBox="0 0 18 18"><path d="M15.300 9.200A6.300 6.300 0 1 0 11.200 15.100" fill="none" stroke="#fff" stroke-width="1.700" stroke-linecap="round"/><rect x="14" y="7.600" width="2.500" height="4.200" rx="1.100" fill="#fff"/><circle cx="7" cy="8.700" r="1" fill="#fff"/><circle cx="11.300" cy="8.700" r="1" fill="#fff"/></svg>
<svg class="abs" style="left:9px;top:47px" width="18" height="18" viewBox="0 0 18 18"><circle cx="9" cy="9" r="8" fill="#fff"/><path d="M5 13l1-3.500 5.500-5.500 2.500 2.500L8.500 12z" fill="#4da7f5"/><path d="M5 14h8" stroke="#4da7f5" stroke-width="1.200"/></svg>
<svg class="abs" style="left:8px;top:82.500px" width="20" height="18" viewBox="0 0 20 18"><ellipse cx="7.500" cy="7" rx="6.500" ry="5.500" fill="#fff"/><path d="M3.500 11l-1 3 3.500-2z" fill="#fff"/><ellipse cx="13.500" cy="11.500" rx="5.500" ry="4.500" fill="#fff" stroke="#4da7f5" stroke-width="1"/><path d="M16.500 15l1 2.300-3-1.500z" fill="#fff"/><circle cx="5.300" cy="5.500" r=".9" fill="#4da7f5"/><circle cx="9.500" cy="5.500" r=".9" fill="#4da7f5"/><circle cx="11.800" cy="10.500" r=".8" fill="#4da7f5"/><circle cx="15.200" cy="10.500" r=".8" fill="#4da7f5"/></svg>
</div>
</body>
</html>
